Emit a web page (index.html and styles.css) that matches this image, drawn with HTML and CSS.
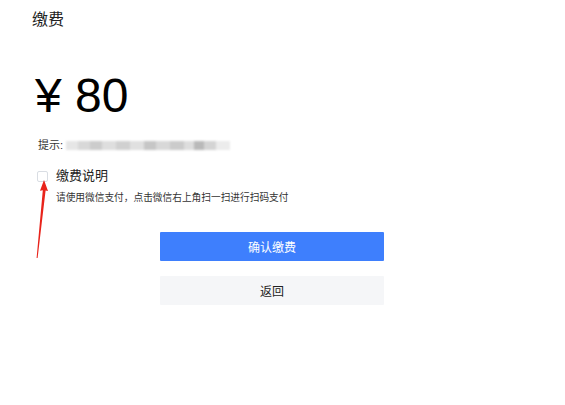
FILE: index.html
```html
<!DOCTYPE html>
<html lang="zh">
<head>
<meta charset="utf-8">
<title>缴费</title>
<link rel="stylesheet" href="styles.css">
</head>
<body>
<div class="page">
  <div class="title">缴费</div>
  <div class="amount">¥ 80</div>
  <div class="tip"><span class="tip-label">提示:</span><span class="blurred" aria-hidden="true"></span></div>
  <div class="check-row">
    <span class="checkbox"></span>
    <span class="check-label">缴费说明</span>
  </div>
  <div class="desc">请使用微信支付，点击微信右上角扫一扫进行扫码支付</div>
  <div class="actions">
    <button class="btn btn-primary">确认缴费</button>
    <button class="btn btn-default">返回</button>
  </div>
  <svg class="arrow" width="20" height="90" viewBox="0 0 20 90">
    <polygon points="12,2 16,13 13.6,12.6 5.6,80 4.6,80 10.8,12.2 8,12.8" fill="#e8231b"/>
  </svg>
</div>
</body>
</html>
```

FILE: styles.css
```css
html, body {
  margin: 0;
  padding: 0;
  background: #ffffff;
}
body {
  font-family: "Liberation Sans", "Noto Sans CJK SC", sans-serif;
  color: #333333;
}
.page {
  position: relative;
  width: 565px;
  height: 405px;
  overflow: hidden;
}
.title {
  padding: 10px 0 0 32px;
  font-size: 16px;
  line-height: 20px;
  color: #222222;
}
.amount {
  margin-top: 42px;
  padding-left: 35px;
  font-size: 48px;
  line-height: 48px;
  color: #000000;
}
.tip {
  margin-top: 18px;
  padding-left: 38px;
  font-size: 11px;
  line-height: 14px;
  color: #333333;
  display: flex;
  align-items: center;
}
.tip-label {
  margin-right: 3px;
}
.blurred {
  display: inline-block;
  width: 164px;
  height: 9px;
  background: linear-gradient(90deg,
    #e6e6e6 0, #e6e6e6 12px, #d8d8d8 12px, #d8d8d8 24px,
    #cccccc 24px, #cccccc 36px, #dedede 36px, #dedede 50px,
    #d0d0d0 50px, #d0d0d0 64px, #e0e0e0 64px, #e0e0e0 78px,
    #c6c6c6 78px, #c6c6c6 90px, #d8d8d8 90px, #d8d8d8 104px,
    #cbcbcb 104px, #cbcbcb 118px, #dddddd 118px, #dddddd 128px,
    #b9b9b9 128px, #b9b9b9 138px, #d4d4d4 138px, #d4d4d4 150px,
    #ececec 150px, #ececec 164px);
  filter: blur(1px);
}
.check-row {
  margin-top: 16px;
  padding-left: 37px;
  height: 16px;
  display: flex;
  align-items: center;
  gap: 8px;
}
.checkbox {
  width: 9px;
  height: 9px;
  border: 1px solid #d9dde3;
  border-radius: 2px;
  background: #ffffff;
}
.check-label {
  font-size: 13px;
  line-height: 16px;
  color: #222222;
}
.desc {
  margin-top: 6px;
  padding-left: 56px;
  font-size: 9.7px;
  line-height: 16px;
  color: #333333;
}
.actions {
  margin-top: 26px;
  margin-left: 160px;
  width: 224px;
  display: flex;
  flex-direction: column;
  gap: 15px;
}
.btn {
  height: 29px;
  border: none;
  border-radius: 1px;
  font-family: "Liberation Sans", "Noto Sans CJK SC", sans-serif;
  font-size: 12px;
  padding: 0;
}
.btn-primary {
  background: #3e7ffd;
  color: #ffffff;
}
.btn-default {
  background: #f5f6f8;
  color: #222222;
}
.arrow {
  position: absolute;
  left: 32px;
  top: 178px;
}
```
